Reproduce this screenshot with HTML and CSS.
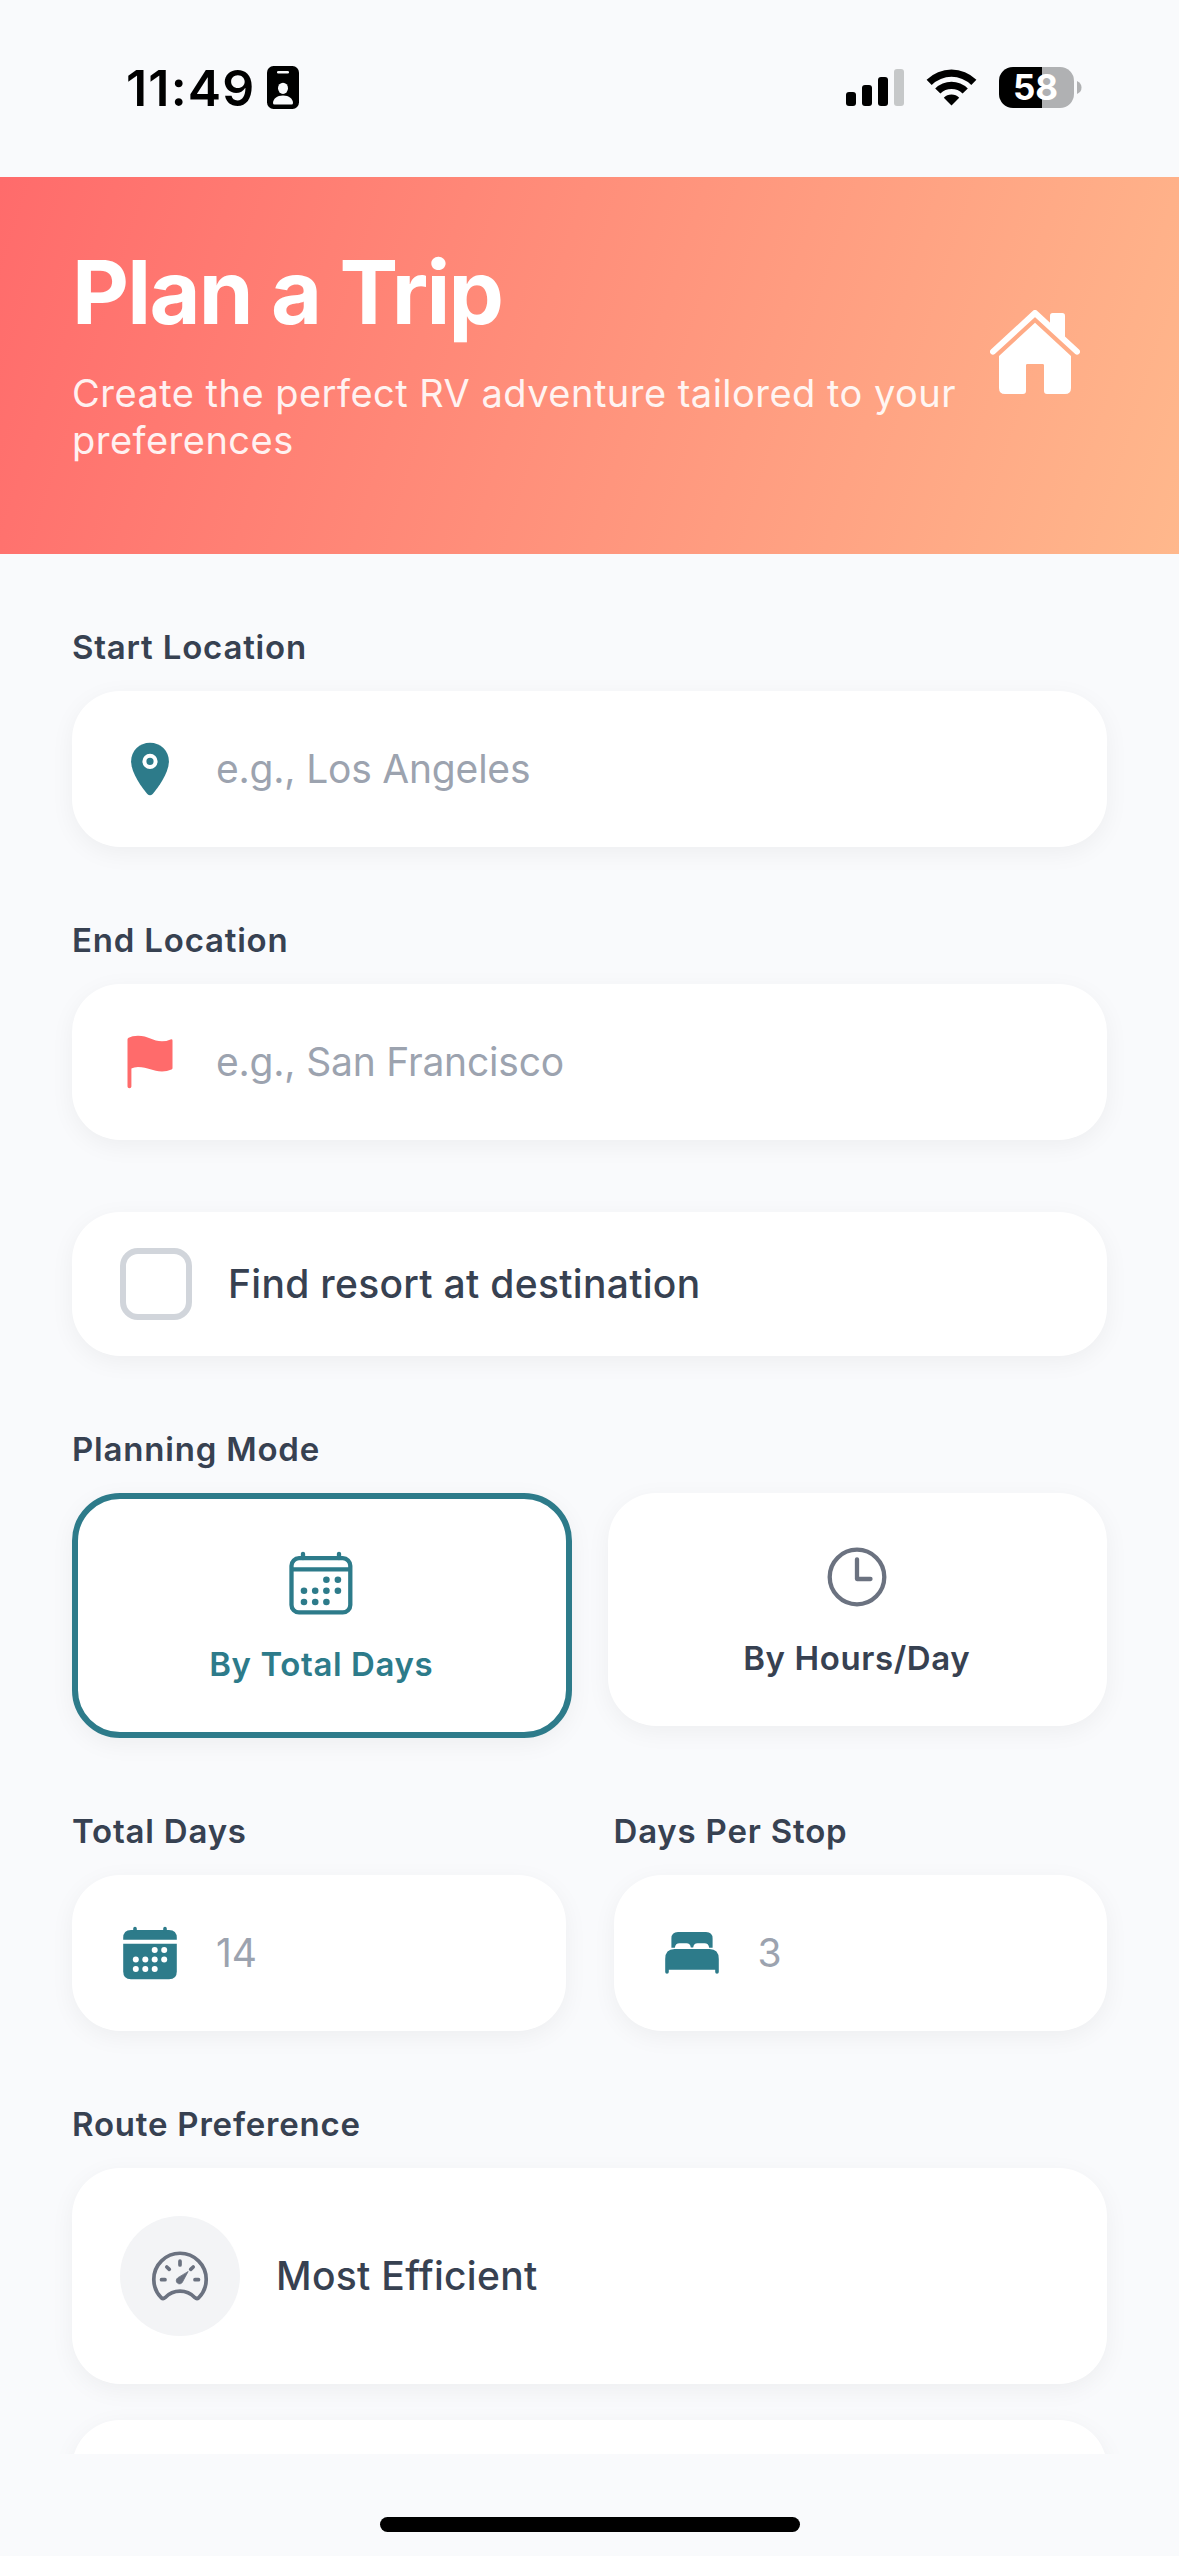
FILE: index.html
```html
<!DOCTYPE html>
<html lang="en">
<head>
    <meta charset="UTF-8">
    <meta name="viewport" content="width=device-width, initial-scale=1.0">
    <title>Plan a Trip</title>
    <link rel="stylesheet" href="styles.css">
</head>
<body>

<div class="status-bar">
    <span class="time">11:49</span>
    <svg class="badge-icon" width="32" height="43" viewBox="0 0 32 43">
        <rect width="32" height="43" rx="6.5"/>
        <rect x="10" y="5" width="12" height="2.6" rx="1.3" fill="#f9fafc"/>
        <ellipse cx="16" cy="22.3" rx="5" ry="5.6" fill="#f9fafc"/>
        <path d="M6 37 C6 33 10 29.5 16 29.5 C22 29.5 26 33 26 37 Q26 38.6 24.5 38.6 H7.5 Q6 38.6 6 37z" fill="#f9fafc"/>
    </svg>
    <div class="status-right">
        <svg width="58" height="37" viewBox="0 0 58 37">
            <rect x="0" y="23" width="10" height="14" rx="3"/>
            <rect x="16" y="16" width="10" height="21" rx="3"/>
            <rect x="32" y="8" width="10" height="29" rx="3"/>
            <rect x="48" y="0" width="10" height="37" rx="3" fill="#c6c8c9"/>
        </svg>
        <svg class="wifi" width="51" height="38" viewBox="0 0 51 38">
            <path d="M0.6 10.8 A35.5 35.5 0 0 1 50.4 10.8 L45.3 15.9 A28.3 28.3 0 0 0 5.7 15.9 Z"/>
            <path d="M9.2 19.4 A23.3 23.3 0 0 1 41.8 19.4 L36.6 24.6 A16 16 0 0 0 14.4 24.6 Z"/>
            <path d="M17.8 28.7 A11 11 0 0 1 33.2 28.7 L25.5 36.6 Z"/>
        </svg>
        <div class="battery">58</div>
        <svg class="battery-cap" width="5" height="13" viewBox="0 0 5 13"><path d="M0 0 Q4.5 2 4.5 6.5 Q4.5 11 0 13z" fill="#b0b1b3"/></svg>
    </div>
</div>

<header class="header">
    <div class="header-text">
        <h1>Plan a Trip</h1>
        <p>Create the perfect RV adventure tailored to your preferences</p>
    </div>
    <div class="header-icon">
        <svg width="90" height="84" viewBox="90 87 270 252" fill="#fff">
            <path d="M99 212 L225 96 L351 212" fill="none" stroke="#fff" stroke-width="18" stroke-linecap="round" stroke-linejoin="round"/>
            <path d="M270 128 V104 Q270 96 278 96 H307 Q315 96 315 104 V172 Z"/>
            <path d="M225 125 L333 225 V321 Q333 339 315 339 H261 Q252 339 252 330 V253 Q252 249 248 249 H202 Q198 249 198 253 V330 Q198 339 189 339 H135 Q117 339 117 321 V225 Z"/>
        </svg>
    </div>
</header>

<main class="form">
    <section class="group">
        <label class="label" for="start">Start Location</label>
        <div class="card field">
            <svg width="60" height="60" viewBox="0 0 60 60" fill="#2d7b8a">
                <path d="M30 3.7 C19.5 3.7 11.1 11.8 11.1 22.3 C11.1 34 22 48.5 27.3 55 Q30 57.7 32.7 55 C38 48.5 48.9 34 48.9 22.3 C48.9 11.8 40.5 3.7 30 3.7z"/>
                <circle cx="30" cy="22.3" r="5.6" fill="none" stroke="#fff" stroke-width="4"/>
            </svg>
            <input id="start" type="text" placeholder="e.g., Los Angeles">
        </div>
    </section>

    <section class="group">
        <label class="label" for="end">End Location</label>
        <div class="card field">
            <svg width="60" height="60" viewBox="0 0 60 60" fill="#ff6b6b">
                <path d="M7.5 7.5 Q7.5 6.3 8.6 5.7 Q12 3.7 18 3.7 C28 3.7 33 9.3 42 9.3 Q46.5 9.3 50.5 7.4 Q52.5 6.6 52.5 8.6 V36 Q52.5 37 51.5 37.5 Q47 39.4 42 39.4 C33 39.4 28 35 18 35 Q14 35 11.4 36.5 V54.5 Q11.4 56.2 9.45 56.2 Q7.5 56.2 7.5 54.5z"/>
            </svg>
            <input id="end" type="text" placeholder="e.g., San Francisco">
        </div>
    </section>

    <section class="group card check-row">
        <div class="checkbox"></div>
        <span class="option-text">Find resort at destination</span>
    </section>

    <section class="group">
        <div class="label">Planning Mode</div>
        <div class="modes">
            <div class="card mode active">
                <svg width="72" height="72" viewBox="0 0 72 72" fill="#2d7b8a">
                    <g fill="none" stroke="#2d7b8a" stroke-width="4.3">
                        <rect x="6.5" y="11.2" width="58.8" height="54.2" rx="7.5"/>
                        <path d="M6.5 22.3 H65"/>
                        <path d="M18 6.8 V11 M54 6.8 V11" stroke-linecap="round"/>
                    </g>
                    <circle cx="41.4" cy="32.7" r="3.3"/><circle cx="52.9" cy="32.7" r="3.3"/>
                    <circle cx="19" cy="43.7" r="3.3"/><circle cx="30.2" cy="43.7" r="3.3"/><circle cx="41.4" cy="43.7" r="3.3"/><circle cx="52.9" cy="43.7" r="3.3"/>
                    <circle cx="19" cy="55" r="3.3"/><circle cx="30.2" cy="55" r="3.3"/><circle cx="41.4" cy="55" r="3.3"/>
                </svg>
                <span>By Total Days</span>
            </div>
            <div class="card mode">
                <svg width="72" height="72" viewBox="0 0 72 72" fill="none" stroke="#6b7280" stroke-width="4.3">
                    <circle cx="36" cy="36" r="27.3"/>
                    <path d="M36 18.3 V38 H49.5" stroke-linecap="round" stroke-linejoin="round"/>
                </svg>
                <span>By Hours/Day</span>
            </div>
        </div>
    </section>

    <section class="group row">
        <div class="col">
            <label class="label" for="days">Total Days</label>
            <div class="card field">
                <svg width="60" height="60" viewBox="0 0 60 60" fill="#2d7b8a">
                    <path d="M3.2 16.7 V15 Q3.2 7 11 7 H49 Q56.8 7 56.8 15 V16.7z"/>
                    <path d="M3.2 20.7 H56.8 V48.5 Q56.8 56.3 49 56.3 H11 Q3.2 56.3 3.2 48.5z"/>
                    <path d="M15 5.5 V8 M45 5.5 V8" stroke="#2d7b8a" stroke-width="3.6" stroke-linecap="round"/>
                    <g fill="#fff">
                        <circle cx="34.7" cy="27" r="3"/><circle cx="44.2" cy="27" r="3"/>
                        <circle cx="15.8" cy="36.6" r="3"/><circle cx="25.3" cy="36.6" r="3"/><circle cx="34.7" cy="36.6" r="3"/><circle cx="44.2" cy="36.6" r="3"/>
                        <circle cx="15.8" cy="46" r="3"/><circle cx="25.3" cy="46" r="3"/><circle cx="34.7" cy="46" r="3"/>
                    </g>
                </svg>
                <input id="days" type="text" placeholder="14">
            </div>
        </div>
        <div class="col">
            <label class="label" for="stop">Days Per Stop</label>
            <div class="card field">
                <svg width="60" height="60" viewBox="0 0 60 60" fill="#2d7b8a">
                    <path d="M9.4 24.7 V15.5 Q9.4 9 16 9 H44 Q50.6 9 50.6 15.5 V24.7 H47.2 Q46.5 20.3 42.5 20.3 H35.5 Q31.8 20.3 31.2 24.4 H28.8 Q28.2 20.3 24.5 20.3 H17.5 Q13.5 20.3 12.8 24.7z"/>
                    <path d="M3.2 36 Q3.2 26 12.5 26 H47.5 Q56.8 26 56.8 36 V49 Q56.8 50.8 55 50.8 Q53.2 50.8 53.2 49 V46.8 H6.8 V49 Q6.8 50.8 5 50.8 Q3.2 50.8 3.2 49z"/>
                </svg>
                <input id="stop" type="text" placeholder="3">
            </div>
        </div>
    </section>

    <section class="group">
        <div class="label">Route Preference</div>
        <div class="card route">
            <div class="route-icon">
                <svg width="120" height="120" viewBox="0 0 120 120" fill="none" stroke="#6b7280" stroke-width="3.7" stroke-linecap="round" stroke-linejoin="round">
                    <path d="M41.3 81.8 A26.2 26.2 0 1 1 78.7 81.8 Q76.8 83.3 75 81.7 C66.5 73 53.5 73 45 81.7 Q43.2 83.3 41.3 81.8z"/>
                    <path d="M60 45.2 V49 M41.5 63.7 H45 M75 63.7 H78.5 M46.8 51 L49.3 53.3 M73.2 51 L70.7 53.3"/>
                    <path d="M68 55.8 L62.5 66 A3.3 3.3 0 1 1 57.6 61.9z" fill="#6b7280" stroke-width="0.8"/>
                </svg>
            </div>
            <span class="option-text">Most Efficient</span>
        </div>
        <div class="card route"></div>
    </section>
</main>

<div class="home-indicator"></div>

</body>
</html>
```

FILE: styles.css
```css
* {
    box-sizing: border-box;
}
body {
    margin: 0;
    height: 2556px;
    overflow: hidden;
    display: flex;
    flex-direction: column;
    font-family: Inter, "Liberation Sans", sans-serif;
    background: #f9fafc;
    color: #374151;
}
svg {
    display: block;
    flex-shrink: 0;
}

/* status bar */
.status-bar {
    display: flex;
    align-items: center;
    height: 177px;
    flex-shrink: 0;
    padding: 0 97px 2px 126px;
    color: #000;
}
.time {
    width: 141px;
    font-size: 50px;
    font-weight: 600;
    letter-spacing: 1.2px;
}
.status-right {
    display: flex;
    align-items: center;
    margin-left: auto;
}
.wifi {
    margin: 0 22px;
}
.battery {
    width: 75px;
    height: 41px;
    padding-right: 2px;
    border-radius: 14px;
    background: linear-gradient(90deg, #000 43px, #b0b1b3 43px);
    color: #fff;
    font-size: 35px;
    font-weight: 700;
    line-height: 41px;
    text-align: center;
}
.battery-cap {
    margin-left: 3px;
}

/* header */
.header {
    display: flex;
    height: 377px;
    flex-shrink: 0;
    padding: 62px 72px 90px;
    background: linear-gradient(107.7deg, #ff6b6b, #ffb88c);
    color: #fff;
}
.header-text {
    flex: 1;
}
.header h1 {
    margin: 0 0 24px;
    font-size: 88px;
    font-weight: 700;
    line-height: 107px;
    letter-spacing: -1.7px;
}
.header p {
    margin: 0;
    font-size: 38px;
    font-weight: 400;
    line-height: 47px;
    letter-spacing: 0.48px;
    opacity: 0.9;
}
.header-icon {
    display: flex;
    align-items: center;
    justify-content: center;
    width: 144px;
}

/* form */
.form {
    height: 1900px;
    flex-shrink: 0;
    padding: 72px 72px 0;
    overflow: hidden;
}
.group {
    margin-bottom: 72px;
}
.label {
    display: block;
    margin-bottom: 23px;
    font-size: 33px;
    font-weight: 600;
    line-height: 42px;
    letter-spacing: 0.8px;
}
.card {
    background: #fff;
    border-radius: 48px;
    box-shadow: 0 6px 24px rgba(0, 0, 0, 0.05);
}
.field {
    display: flex;
    align-items: center;
    gap: 36px;
    height: 156px;
    padding: 0 48px;
}
.field input {
    flex: 1;
    min-width: 0;
    padding: 0 0 1px;
    border: 0;
    outline: 0;
    background: none;
    font-family: inherit;
    font-size: 39px;
    letter-spacing: -0.2px;
    color: #374151;
}
.field input::placeholder {
    color: #9ca3af;
}
.check-row {
    display: flex;
    align-items: center;
    gap: 36px;
    height: 144px;
    padding: 0 48px;
}
.checkbox {
    width: 72px;
    height: 72px;
    border: 6px solid #d1d5db;
    border-radius: 18px;
}
.option-text {
    padding-bottom: 1px;
    font-size: 39px;
    font-weight: 500;
    letter-spacing: 0.3px;
}
.modes {
    display: grid;
    grid-template-columns: 1fr 1fr;
    align-items: start;
    gap: 36px;
}
.mode {
    display: flex;
    flex-direction: column;
    align-items: center;
    gap: 25px;
    padding: 48px 1px 47px 0;
    font-size: 33px;
    font-weight: 600;
    line-height: 41px;
    letter-spacing: 0.6px;
}
.mode.active {
    border: 6px solid #2d7b8a;
    color: #2d7b8a;
}
.row {
    display: flex;
    gap: 48px;
}
.col {
    flex: 1;
    min-width: 0;
}
.route {
    display: flex;
    align-items: center;
    gap: 36px;
    height: 216px;
    margin-bottom: 36px;
    padding: 0 48px;
}
.route-icon {
    width: 120px;
    height: 120px;
    border-radius: 50%;
    background: #f3f4f6;
}
.home-indicator {
    width: 420px;
    height: 15px;
    flex-shrink: 0;
    margin: 63px auto 0;
    border-radius: 8px;
    background: #000;
}
```
